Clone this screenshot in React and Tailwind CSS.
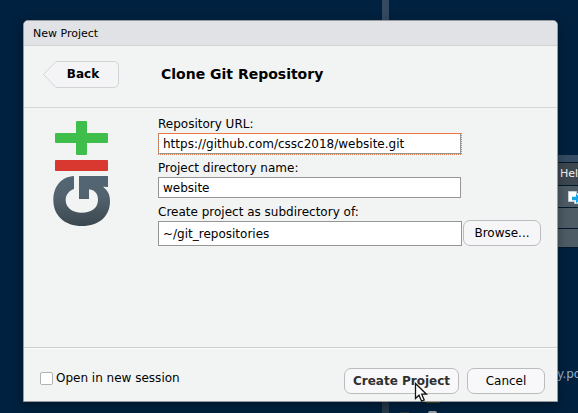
function GitLogo() {
  return (
    <svg className="block h-[107px] w-[58px]" viewBox="39 30 174 321">
      <defs>
        <linearGradient id="steel" x1="0" y1="0" x2="0" y2="1">
          <stop offset="0" stopColor="#536674" />
          <stop offset="0.4" stopColor="#53636f" />
          <stop offset="1" stopColor="#3b474f" />
        </linearGradient>
      </defs>
      <path
        d="M111 33h27q3 0 3 3v33h60q3 0 3 3v24q0 3-3 3h-60v33q0 3-3 3h-27q-3 0-3-3V99H48q-3 0-3-3V72q0-3 3-3h60V36q0-3 3-3z"
        fill="#40be4b"
      />
      <rect x="45" y="150" width="159" height="33" rx="2" fill="#d93831" />
      <path
        d="M102 198V237C86 243 77 255 77 270C77 293 97 308 125 308C155 308 174 293 174 269C174 251 164 240 147 238V267H117V198H204V231L189 230C203 241 210 253 210 273C210 318 178 348 126 348C74 348 40 317 40 270C40 228 65 200 102 198Z"
        fill="url(#steel)"
      />
    </svg>
  );
}

function Desktop() {
  return (
    <>
      <div className="absolute top-0 left-[382px] h-[402px] w-[7px] bg-[#344a60]" />
      <div className="absolute top-[402px] left-[382px] h-[11px] w-[7px] bg-[#273949]" />
      <div className="absolute top-[402px] left-[426px] h-px w-[14px] bg-[#4b4b1c]" />
      <div className="absolute top-[412px] left-[400px] h-px w-[9px] bg-[#26343a]" />
      <div className="absolute top-[411px] left-[428px] h-[2px] w-[9px] rounded-t-sm bg-[#9ba0a4]" />
      <div className="absolute top-[155px] left-[557px] flex w-[21px] flex-col gap-px bg-[#04192b] pb-px text-[11px] text-[#f0f1f2]">
        <div className="h-[7px] bg-[#344d65]" />
        <div className="h-[22px] bg-[#3d474f] pl-[3px] leading-[21px] whitespace-nowrap">Hel</div>
        <div className="h-[21px] overflow-hidden bg-[#4e5c66]">
          <svg className="block h-[21px] w-[21px]" viewBox="0 0 21 21">
            <path d="M11.5 5.500h8v2h3v10h-5v-2h-6z" fill="#fff" stroke="#c5cdd2" />
            <path d="M15 10.800h4v-3.300l5 5-5 5v-3.300h-4z" fill="#17a5e8" />
          </svg>
        </div>
        <div className="h-[20px] bg-[#4e5c66]" />
        <div className="h-[18px] bg-[#4e5c66]" />
      </div>
      <div className="absolute top-[366px] left-[557px] text-[12px] leading-4 whitespace-nowrap text-[#9aabc9]">
        y.po
      </div>
    </>
  );
}

function Pointer() {
  return (
    <svg className="absolute top-[382px] left-[414px] h-[21px] w-[14px]" viewBox="0 0 14 21">
      <path
        d="M1.500 1.500V16.500L5 13.200L7.600 19.200L10.200 18L7.700 12.200H12.400Z"
        fill="#fff"
        stroke="#111"
        strokeWidth="1.3"
      />
    </svg>
  );
}

function BackButton() {
  return (
    <button className="relative h-[27px] w-[76px] pb-[2px] pl-1 text-[12px] font-bold">
      <svg className="absolute inset-0 h-[27px] w-[76px]" viewBox="0 0 76 27">
        <path d="M0.500 13.500L13 .5H70.500q5 0 5 5v16q0 5-5 5H13Z" fill="#f4f4f6" stroke="#d0d3d3" />
      </svg>
      <span className="relative">Back</span>
    </button>
  );
}

function FocusRing() {
  return (
    <svg className="absolute -top-px -left-px h-[22px] w-[304px]" viewBox="0 0 304 22">
      <path
        d="M0 .5H303M.5 0V20M303.500 0V21M0 21.500H303"
        fill="none"
        stroke="#ee7642"
        strokeWidth="1"
        strokeDasharray="1 1"
        shapeRendering="crispEdges"
      />
    </svg>
  );
}

function Field({ label, value, focused }) {
  return (
    <div>
      <div className="h-[23px] pt-[5px] leading-[18px]">{label}</div>
      <div className="relative h-[21px] w-[303px] border border-[#969696] bg-white pl-1 leading-[21px]">
        {value}
        {focused && <FocusRing />}
      </div>
    </div>
  );
}

export default function App() {
  return (
    <div className="relative h-[413px] w-[578px] overflow-hidden bg-[#00213f] font-['DejaVu_Sans',sans-serif] text-[12px] text-black">
      <Desktop />
      <div className="absolute top-[20px] left-[23px] flex h-[382px] w-[535px] flex-col overflow-hidden rounded-t-[5px] border border-[#979b9d] bg-[#f2f4f3] shadow-[0_4px_12px_rgba(0,0,0,0.35)]">
        <div className="h-[25px] border-b border-[#d3d5d5] bg-[#e1e2e5] pl-[9px] text-[11px] leading-[26px]">New Project</div>
        <div className="flex h-[62px] items-start border-b border-[#d5d8d7] pt-[15px] pl-[19px]">
          <BackButton />
          <h1 className="ml-[42px] text-[14px] leading-[26px] font-bold">Clone Git Repository</h1>
        </div>
        <div className="flex h-[240px] border-b border-[#cdcfcf]">
          <div className="w-[134px] pt-[12px] pl-[29px]">
            <GitLogo />
          </div>
          <div className="pt-[2px]">
            <Field label="Repository URL:" value="https://github.com/cssc2018/website.git" focused />
            <Field label="Project directory name:" value="website" />
            <div className="h-[22px] pt-[5px] leading-[18px]">Create project as subdirectory of:</div>
            <div className="flex gap-px">
              <div className="mt-px h-[25px] w-[304px] border border-[#969696] bg-white pl-1 leading-[24px]">
                ~/git_repositories
              </div>
              <button className="h-[26px] w-[78px] rounded-[7px] border border-[#bcbcbe] bg-[#f6f6f8] leading-[24px]">
                Browse...
              </button>
            </div>
          </div>
        </div>
        <div className="flex h-[53px] items-start border-t border-[#fafbfb] pt-[19px] pr-[12px] pl-[16px]">
          <label className="mt-[3px] flex items-center gap-[3px] leading-[14px]">
            <span className="h-[13px] w-[13px] rounded-[2px] border border-[#b1b3b3] bg-white" />
            Open in new session
          </label>
          <button className="ml-auto h-[26px] w-[115px] rounded-[7px] border border-[#bcbcbe] bg-[#f8f8fa] leading-[24px] font-bold text-[#303030]">
            Create Project
          </button>
          <button className="ml-[8px] h-[26px] w-[78px] rounded-[7px] border border-[#bcbcbe] bg-[#f8f8fa] leading-[24px]">
            Cancel
          </button>
        </div>
      </div>
      <Pointer />
    </div>
  );
}
